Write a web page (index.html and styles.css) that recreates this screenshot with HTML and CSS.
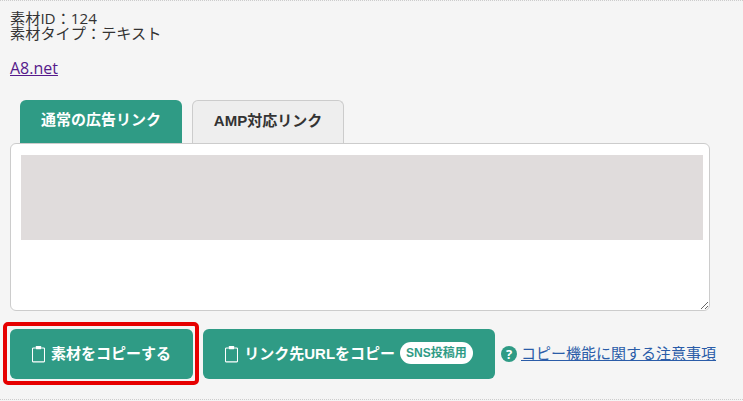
FILE: index.html
```html
<!DOCTYPE html>
<html lang="ja">
<head>
  <meta charset="UTF-8">
  <meta name="viewport" content="width=device-width, initial-scale=1.0">
  <title>素材</title>
  <link rel="stylesheet" href="styles.css">
</head>
<body>
  <div class="panel">
    <p class="info">素材ID：124<br>素材タイプ：テキスト</p>
    <p class="site"><a href="#" class="site-link">A8.net</a></p>

    <div class="tabs">
      <div class="tab tab-active">通常の広告リンク</div>
      <div class="tab">AMP対応リンク</div>
    </div>

    <div class="code-box">
      <div class="code-mask"></div>
    </div>

    <div class="actions">
      <button class="copy-button copy-main">
        <svg class="clip-icon" viewBox="0 0 14 18" width="13" height="18"><path d="M4 2.5H1.5a1 1 0 0 0-1 1V16.500a1 1 0 0 0 1 1h11a1 1 0 0 0 1-1V3.500a1 1 0 0 0-1-1H10" fill="none" stroke="#fff" stroke-width="1.200"/><rect x="4" y="0.500" width="6" height="3.500" rx="0.800" fill="#fff"/></svg>
        素材をコピーする
      </button>
      <button class="copy-button copy-url">
        <svg class="clip-icon" viewBox="0 0 14 18" width="13" height="18"><path d="M4 2.5H1.5a1 1 0 0 0-1 1V16.500a1 1 0 0 0 1 1h11a1 1 0 0 0 1-1V3.500a1 1 0 0 0-1-1H10" fill="none" stroke="#fff" stroke-width="1.200"/><rect x="4" y="0.500" width="6" height="3.500" rx="0.800" fill="#fff"/></svg>
        リンク先URLをコピー
        <span class="sns-badge">SNS投稿用</span>
      </button>
      <div class="help">
        <span class="help-icon">?</span>
        <a href="#" class="help-link">コピー機能に関する注意事項</a>
      </div>
    </div>
  </div>
</body>
</html>
```

FILE: styles.css
```css
html, body {
  margin: 0;
  height: 100%;
}

body {
  background-color: #f5f5f5;
  color: #333;
  font-family: "Open Sans", "Noto Sans CJK JP", sans-serif;
  overflow: hidden;
}

.panel {
  height: 400px;
  box-sizing: border-box;
  border-top: 1px dotted #ccc;
  border-bottom: 1px dotted #ccc;
  padding: 10px 0 0 10px;
}

.info {
  margin: 0;
  font-size: 15.2px;
  line-height: 15px;
}

.site {
  margin: 17px 0 0;
  font-size: 16px;
  line-height: 20px;
}

.site-link {
  color: #551a8b;
}

.tabs {
  display: flex;
  gap: 10px;
  margin: 22px 0 0 10px;
}

.tab {
  width: 150px;
  height: 42px;
  border: 1px solid #ccc;
  border-bottom: none;
  border-radius: 6px 6px 0 0;
  background-color: #eee;
  color: #333;
  font-family: "Liberation Sans", "Noto Sans CJK JP", sans-serif;
  font-size: 15px;
  font-weight: bold;
  line-height: 40px;
  text-align: center;
}

.tab-active {
  width: 162px;
  height: 43px;
  border: none;
  background-color: #2f9b85;
  color: #fff;
}

.code-box {
  width: 682px;
  height: 155px;
  border: 1px solid #ccc;
  border-radius: 6px;
  background-color: #fff;
  padding: 11px 6px 0 10px;
  resize: both;
  overflow: auto;
}

.code-mask {
  height: 85px;
  background-color: #e0dcdc;
}

.actions {
  display: flex;
  align-items: center;
  gap: 10px;
  margin-top: 18px;
}

.copy-button {
  display: flex;
  flex-shrink: 0;
  align-items: center;
  justify-content: center;
  height: 50px;
  border: none;
  border-radius: 6px;
  background-color: #2f9b85;
  color: #fff;
  font-family: "Liberation Sans", "Noto Sans CJK JP", sans-serif;
  font-size: 15px;
  font-weight: bold;
  padding: 0 0 4px;
}

.copy-main {
  position: relative;
  width: 183px;
}

/* red frame around the main button */
.copy-main::after {
  content: "";
  position: absolute;
  top: -7px;
  right: -6px;
  bottom: -6px;
  left: -7px;
  border: 4px solid #e60000;
  border-radius: 5px;
}

.copy-url {
  width: 292px;
}

.clip-icon {
  margin: 3px 6px 0 0;
}

.sns-badge {
  margin: 2px 0 0 5px;
  padding: 0 6px;
  border-radius: 11px;
  background-color: #fff;
  color: #2f9b85;
  font-size: 12px;
  line-height: 22px;
}

.help {
  display: flex;
  align-items: center;
  gap: 4px;
  margin-left: -4px;
  white-space: nowrap;
}

.help-icon {
  width: 16px;
  height: 16px;
  border-radius: 50%;
  background-color: #2f9b85;
  color: #fff;
  font-size: 13px;
  font-weight: bold;
  line-height: 16px;
  text-align: center;
}

.help-link {
  margin-bottom: 4px;
  color: #2a5ca8;
  font-size: 15px;
}
```
